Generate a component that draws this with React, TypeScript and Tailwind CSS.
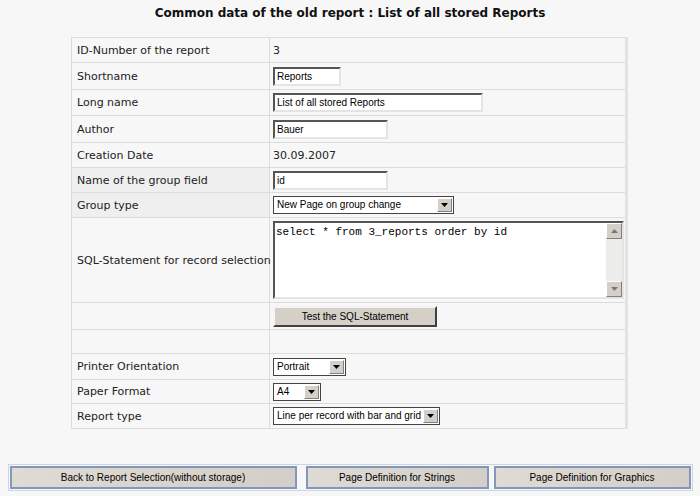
import React from 'react';

const label = "font-['DejaVu_Sans',Verdana,sans-serif] text-[11px] text-[#222] whitespace-nowrap";
const ctl = "font-['Liberation_Sans',Arial,sans-serif] text-[10px] text-black whitespace-nowrap";

const TextInput: React.FC<{ value: string; w: string }> = ({ value, w }) => (
  <div
    className={`${w} h-[19px] bg-white border-2 border-t-[#555] border-l-[#555] border-b-[#e4e4e4] border-r-[#e4e4e4] flex items-center pl-[2px] ${ctl}`}
  >
    {value}
  </div>
);

const Select: React.FC<{ value: string; w: string }> = ({ value, w }) => (
  <div className={`${w} h-[18px] bg-white border border-[#444] flex items-center justify-between overflow-hidden ${ctl}`}>
    <span className="pl-[3px] leading-none">{value}</span>
    <span className="shrink-0 w-[15px] h-[14px] mr-[1px] bg-[#d4d0c8] border border-t-white border-l-white border-b-[#808080] border-r-[#808080] flex items-center justify-center">
      <svg width="7" height="4" viewBox="0 0 7 4">
        <path d="M0 0h7L3.5 4z" fill="#000" />
      </svg>
    </span>
  </div>
);

interface RowProps {
  name?: string;
  h: string;
  shade?: boolean;
  children?: React.ReactNode;
}

const Row: React.FC<RowProps> = ({ name, h, shade, children }) => (
  <div className={`flex ${h} border-b border-[#dcdcdc]`}>
    <div className={`w-[198px] border-r border-[#dcdcdc] flex items-center pl-[5px] pt-[2px] ${label} ${shade ? 'bg-[#efefef]' : ''}`}>
      {name}
    </div>
    <div className={`flex-1 flex items-center pl-[3px] ${label}`}>{children}</div>
  </div>
);

const BottomButton: React.FC<{ text: string; w: string }> = ({ text, w }) => (
  <div
    className={`${w} h-[23px] border-2 border-[#8497b8] bg-gradient-to-r from-[#dedad4] to-[#d3cfc8] flex items-center justify-center ${ctl} text-[#111]`}
  >
    {text}
  </div>
);

export default function App() {
  return (
    <div className="w-[700px] h-[496px] bg-[#f7f7f7] flex flex-col items-center overflow-hidden">
      <h1 className="mt-[4px] h-[18px] font-['DejaVu_Sans',Verdana,sans-serif] font-bold text-[12px] text-[#111] leading-[18px]">
        Common data of the old report : List of all stored Reports
      </h1>

      <div className="mt-[15px] ml-[-1px] w-[557px] border border-[#dcdcdc] border-r-[3px] border-r-[#e2e2e2] border-b-0">
        <Row name="ID-Number of the report" h="h-[25px]">
          <span className="pt-[2px]">3</span>
        </Row>
        <Row name="Shortname" h="h-[27px]">
          <TextInput value="Reports" w="w-[68px]" />
        </Row>
        <Row name="Long name" h="h-[26px]">
          <TextInput value="List of all stored Reports" w="w-[210px]" />
        </Row>
        <Row name="Author" h="h-[27px]">
          <TextInput value="Bauer" w="w-[115px]" />
        </Row>
        <Row name="Creation Date" h="h-[25px]">
          <span className="pt-[2px]">30.09.2007</span>
        </Row>
        <Row name="Name of the group field" h="h-[25px]" shade>
          <TextInput value="id" w="w-[115px]" />
        </Row>
        <Row name="Group type" h="h-[25px]" shade>
          <Select value="New Page on group change" w="w-[181px]" />
        </Row>
        <Row name="SQL-Statement for record selection" h="h-[85px]">
          <div className="w-[351px] h-[78px] bg-white border-2 border-t-[#555] border-l-[#555] border-b-[#e4e4e4] border-r-[#e4e4e4] flex">
            <div className="flex-1 pl-[1px] pt-[3px] font-['Liberation_Mono','Courier_New',monospace] text-[11px] leading-[13px] text-black">
              select * from 3_reports order by id
            </div>
            <div className="w-[16px] bg-[#ececea] flex flex-col justify-between">
              <div className="h-[16px] bg-[#d4d0c8] border border-t-white border-l-white border-b-[#808080] border-r-[#808080] flex items-center justify-center">
                <svg width="7" height="4" viewBox="0 0 7 4">
                  <path d="M3.5 0L7 4H0z" fill="#777" />
                </svg>
              </div>
              <div className="h-[16px] bg-[#d4d0c8] border border-t-white border-l-white border-b-[#808080] border-r-[#808080] flex items-center justify-center">
                <svg width="7" height="4" viewBox="0 0 7 4">
                  <path d="M0 0h7L3.5 4z" fill="#777" />
                </svg>
              </div>
            </div>
          </div>
        </Row>
        <Row h="h-[27px]">
          <div
            className={`w-[164px] h-[21px] bg-[#d4d0c8] border-2 border-t-[#f4f4f4] border-l-[#f4f4f4] border-b-[#404040] border-r-[#404040] flex items-center justify-center ${ctl}`}
          >
            Test the SQL-Statement
          </div>
        </Row>
        <Row h="h-[24px]" />
        <Row name="Printer Orientation" h="h-[26px]">
          <Select value="Portrait" w="w-[73px]" />
        </Row>
        <Row name="Paper Format" h="h-[24px]">
          <Select value="A4" w="w-[48px]" />
        </Row>
        <Row name="Report type" h="h-[25px]">
          <Select value="Line per record with bar and grid" w="w-[167px]" />
        </Row>
      </div>

      <div className="mt-[35px] w-[685px] h-[27px] border border-[#c9d6e6] flex items-center px-[1px]">
        <BottomButton text="Back to Report Selection(without storage)" w="w-[287px]" />
        <BottomButton text="Page Definition for Strings" w="w-[183px] ml-[9px]" />
        <BottomButton text="Page Definition for Graphics" w="w-[197px] ml-[5px]" />
      </div>
    </div>
  );
}
